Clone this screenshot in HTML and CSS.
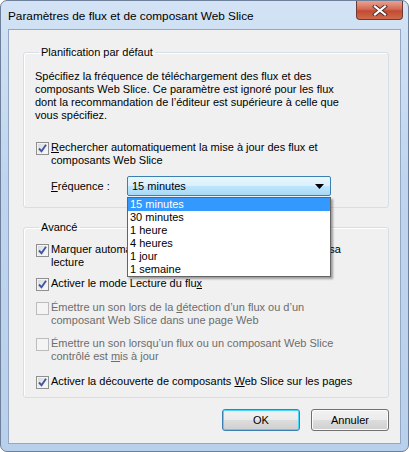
FILE: index.html
```html
<!DOCTYPE html>
<html>
<head>
    <title>Paramètres de flux et de composant Web Slice</title>
    <meta charset="utf-8">
    <link rel="stylesheet" href="styles.css">
</head>
<body>

<div class="window">
    <div class="titlebar">
        <span class="title">Paramètres de flux et de composant Web Slice</span>
        <div class="close">
            <svg width="16" height="11" viewBox="0 0 16 11">
                <path d="M3 1.5 L13 9.5 M13 1.5 L3 9.5" stroke="#4a2b28" stroke-width="4" stroke-linecap="square"/>
                <path d="M3 1.5 L13 9.5 M13 1.5 L3 9.5" stroke="#fff" stroke-width="2.2" stroke-linecap="square"/>
            </svg>
        </div>
    </div>

    <div class="client">
        <fieldset class="group group-top">
            <legend>Planification par défaut</legend>
            <p class="intro">Spécifiez la fréquence de téléchargement des flux et des composants Web Slice. Ce paramètre est ignoré pour les flux dont la recommandation de l’éditeur est supérieure à celle que vous spécifiez.</p>

            <label class="row">
                <span class="check checked"><svg width="11" height="11" viewBox="0 0 11 11"><path d="M2 5.5 L4.5 8.3 L9 1.8" fill="none" stroke="#3f57a0" stroke-width="1.9"/></svg></span>
                <span class="label"><u>R</u>echercher automatiquement la mise à jour des flux et composants Web Slice</span>
            </label>

            <div class="freq">
                <span class="freq-label"><u>F</u>réquence :</span>
                <div class="combo">
                    <div class="combo-box">
                        <span>15 minutes</span>
                        <svg class="arrow" width="9" height="5" viewBox="0 0 9 5"><path d="M0 0 H9 L4.5 5 Z" fill="#000"/></svg>
                    </div>
                    <ul class="combo-list">
                        <li class="selected">15 minutes</li>
                        <li>30 minutes</li>
                        <li>1 heure</li>
                        <li>4 heures</li>
                        <li>1 jour</li>
                        <li>1 semaine</li>
                    </ul>
                </div>
            </div>
        </fieldset>

        <fieldset class="group group-adv">
            <legend>Avancé</legend>

            <label class="row row-mark">
                <span class="check checked"><svg width="11" height="11" viewBox="0 0 11 11"><path d="M2 5.5 L4.5 8.3 L9 1.8" fill="none" stroke="#3f57a0" stroke-width="1.9"/></svg></span>
                <span class="label">Marquer automatiquement le flux comme étant lu lors de sa lecture</span>
            </label>

            <label class="row row-read">
                <span class="check checked"><svg width="11" height="11" viewBox="0 0 11 11"><path d="M2 5.5 L4.5 8.3 L9 1.8" fill="none" stroke="#3f57a0" stroke-width="1.9"/></svg></span>
                <span class="label">Activer le mode Lecture du flu<u>x</u></span>
            </label>

            <label class="row row-sound1 disabled">
                <span class="check"></span>
                <span class="label">Émettre un son lors de la <u>d</u>étection d’un flux ou d’un composant Web Slice dans une page Web</span>
            </label>

            <label class="row row-sound2 disabled">
                <span class="check"></span>
                <span class="label">Émettre un son lorsqu’un flux ou un composant Web Slice contrôlé est <u>m</u>is à jour</span>
            </label>

            <label class="row row-disc">
                <span class="check checked"><svg width="11" height="11" viewBox="0 0 11 11"><path d="M2 5.5 L4.5 8.3 L9 1.8" fill="none" stroke="#3f57a0" stroke-width="1.9"/></svg></span>
                <span class="label">Activer la découverte de composants <u>W</u>eb Slice sur les pages</span>
            </label>
        </fieldset>

        <div class="buttons">
            <button class="btn default">OK</button>
            <button class="btn">Annuler</button>
        </div>
    </div>
</div>

</body>
</html>
```

FILE: styles.css
```css
body {
    margin: 0;
    padding: 0;
    background: #ffffff;
    font-family: "Liberation Sans", Arial, sans-serif;
    font-size: 11px;
    color: #000;
}

.window {
    width: 409px;
    height: 452px;
    box-sizing: border-box;
    border: 1px solid #6d7f99;
    border-radius: 7px;
    background: linear-gradient(to bottom, #d3e3f5 0%, #bfd5ef 40%, #b9d0ec 100%);
    padding: 0 7px 7px 7px;
    display: flex;
    flex-direction: column;
}

.titlebar {
    height: 28px;
    display: flex;
    align-items: flex-start;
    justify-content: space-between;
}

.title {
    margin-top: 7px;
    line-height: 16px;
    font-size: 11.8px;
    color: #000;
}

.close {
    width: 45px;
    height: 18px;
    margin-right: -2px;
    border: 1px solid #6e3a33;
    border-top: none;
    border-radius: 0 0 4px 4px;
    background: linear-gradient(to bottom, #e8a290 0%, #d46a55 45%, #c24b32 55%, #cf6b4b 100%);
    display: flex;
    align-items: center;
    justify-content: center;
}

.client {
    flex: 1;
    background: #f0f0f0;
    border: 1px solid #95a8c2;
    padding: 14px 11px 0 14px;
    display: flex;
    flex-direction: column;
}

.group {
    margin: 0;
    border: 1px solid #d5dfe5;
    border-radius: 3px;
    box-shadow: inset 1px 1px 0 #ffffff;
    padding: 0 11px;
    box-sizing: border-box;
}

.group legend {
    padding: 0 2px;
    margin-left: 4px;
    line-height: 16px;
}

.group-top {
    height: 164px;
}

.intro {
    margin: 10px 0 0 0;
    line-height: 13px;
    max-width: 304px;
}

.row {
    display: flex;
    align-items: flex-start;
    line-height: 13px;
    margin-left: 1px;
}

.group-top .row {
    margin-top: 19px;
}

.check {
    width: 11px;
    height: 11px;
    flex: none;
    margin-top: 1px;
    margin-right: 2px;
    border: 1px solid #8e8f8f;
    background: linear-gradient(135deg, #d2d6dc 0%, #f0f0f0 60%, #fafafa 100%);
    box-shadow: inset 0 0 0 1px #f4f4f4;
    display: flex;
}

.label {
    max-width: 304px;
}

.disabled .label {
    color: #6d6d6d;
}

.disabled .check {
    border-color: #bcbcbc;
    background: #f4f4f4;
}

.freq {
    display: flex;
    align-items: center;
    margin-top: 9px;
    margin-left: 16px;
}

.freq-label {
    width: 76px;
}

.combo {
    position: relative;
    width: 204px;
}

.combo-box {
    height: 20px;
    box-sizing: border-box;
    border: 1px solid #3c7fb1;
    border-radius: 2px;
    background: linear-gradient(to bottom, #eaf6fd 0%, #d9f0fc 50%, #bee6fd 51%, #a7d9f5 100%);
    display: flex;
    align-items: center;
    justify-content: space-between;
    padding: 0 6px 0 4px;
}

.combo-list {
    position: absolute;
    top: 100%;
    left: 0;
    width: 204px;
    box-sizing: border-box;
    margin: 1px 0 0 0;
    padding: 0;
    list-style: none;
    background: #fff;
    border: 1px solid #646464;
    box-shadow: 2px 2px 2px rgba(0, 0, 0, 0.35);
    z-index: 2;
}

.combo-list li {
    height: 13px;
    line-height: 13px;
    padding-left: 2px;
}

.combo-list li.selected {
    background: #3399ff;
    color: #fff;
}

.group-adv {
    margin-top: 11px;
    height: 179px;
}

.group-adv .row {
    margin-top: 10px;
}

.group-adv .row-mark {
    margin-top: 8px;
}

.group-adv .row-read {
    margin-top: 8px;
}

.group-adv .row-disc {
    margin-top: 12px;
}

.buttons {
    display: flex;
    justify-content: flex-end;
    gap: 11px;
    margin-top: 11px;
}

.btn {
    width: 78px;
    height: 22px;
    font-family: inherit;
    font-size: 11px;
    border: 1px solid #707070;
    border-radius: 3px;
    background: linear-gradient(to bottom, #f2f2f2 0%, #ebebeb 50%, #dddddd 51%, #cfcfcf 100%);
    box-shadow: inset 0 0 0 1px #fcfcfc;
    padding: 0;
}

.btn.default {
    border-color: #3c7fb1;
    box-shadow: inset 0 0 0 1px #48d8fb;
}
```
